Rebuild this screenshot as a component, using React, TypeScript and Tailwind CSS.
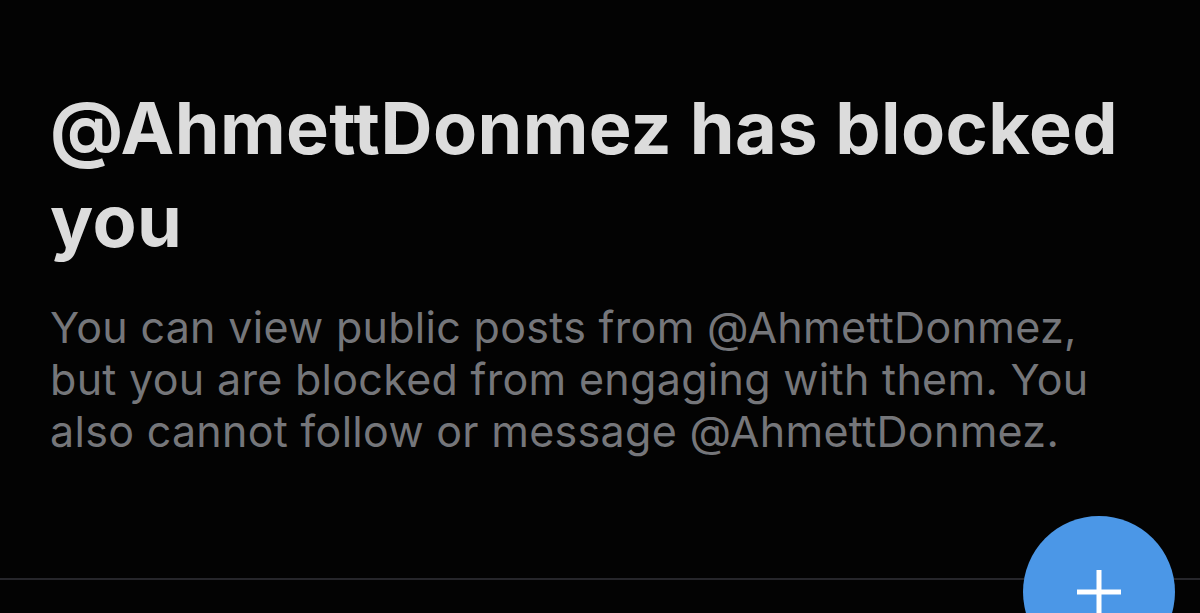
export default function App() {
  return (
    <div className="relative flex h-[613px] w-full flex-col overflow-hidden bg-[#030303] font-['Inter',sans-serif]">
      <div className="px-[50px] pt-[81px]">
        <h1 className="text-[72px] font-bold leading-[93px] tracking-[0.4px] text-[#dcdcdc]">
          @AhmettDonmez has blocked you
        </h1>
        <p className="mt-[34px] max-w-[1040px] text-[43px] leading-[52px] tracking-[0.3px] text-[#75767a]">
          You can view public posts from @AhmettDonmez, but you are blocked from engaging with them. You also cannot follow or message @AhmettDonmez.
        </p>
      </div>

      <div className="mt-auto mb-[33px] h-[2px] w-full bg-[#26262b]" />

      <button className="absolute left-[1023px] top-[516px] flex h-[152px] w-[152px] items-center justify-center rounded-full bg-[#4b97e7]">
        <svg width="48" height="48" viewBox="0 0 48 48">
          <path d="M24 2v44M2 24h44" stroke="#ffffff" strokeWidth="5" />
        </svg>
      </button>
    </div>
  );
}
